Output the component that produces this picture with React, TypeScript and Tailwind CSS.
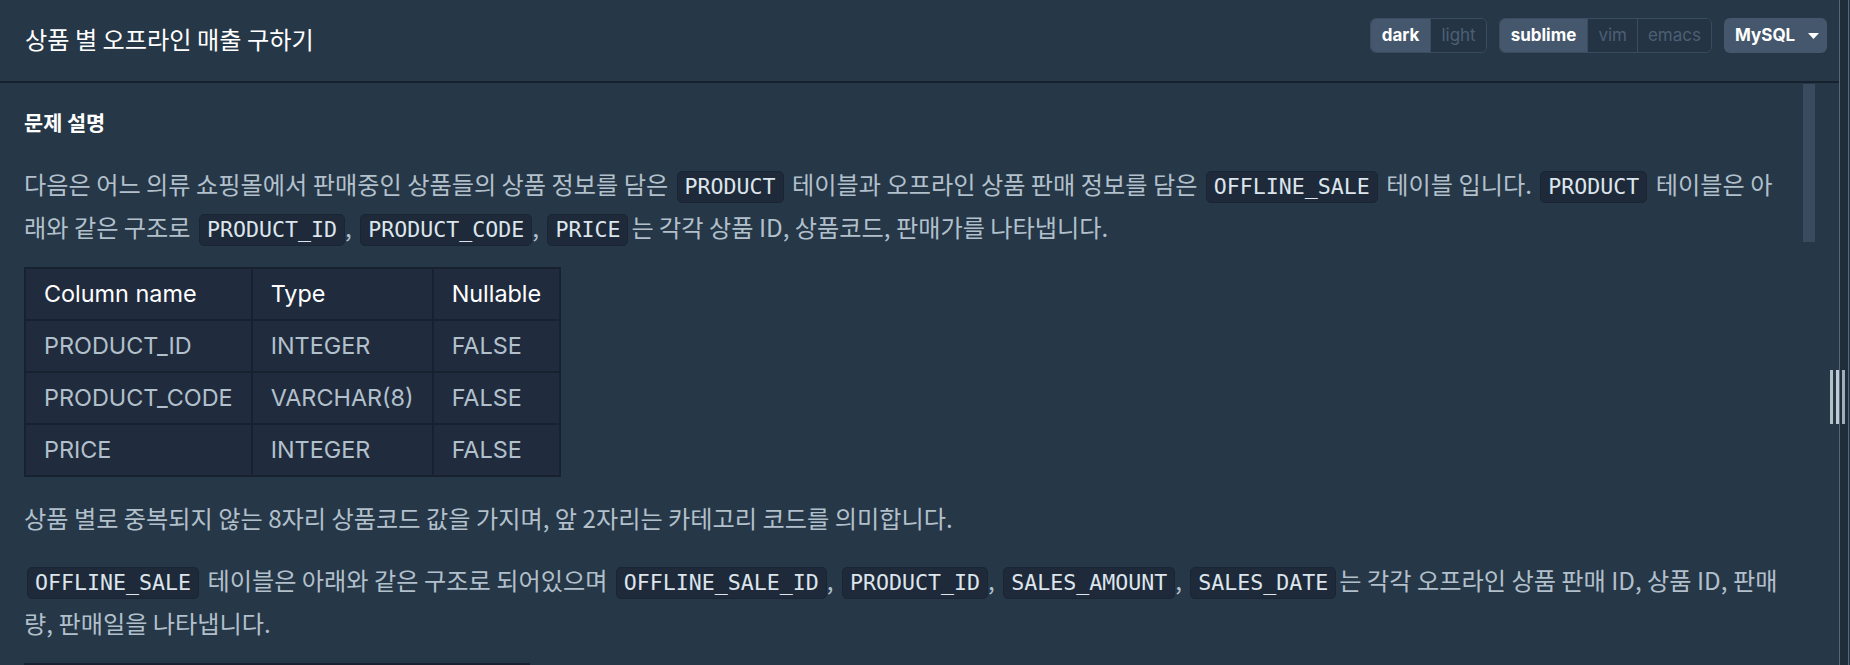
import React from "react";

const KR = "font-['Noto_Sans_CJK_KR',sans-serif]";

function C({ children, tight }: { children: React.ReactNode; tight?: boolean }) {
  return (
    <code
      className={`inline-block ${tight ? "ml-[3px] mr-0" : "mx-[3px]"} px-[7px] py-[3px] leading-[24px] rounded-[5px] border border-[#1a2533] bg-[#1e2a3a] text-[#dde5ec] text-[21.6px] font-['DejaVu_Sans_Mono',monospace]`}
    >
      {children}
    </code>
  );
}

function Table({ rows }: { rows: string[][] }) {
  return (
    <table className="border-collapse border-2 border-[#172130] bg-[#202b3d] font-['Inter','Noto_Sans_CJK_KR',sans-serif] text-[23.4px]">
      <thead>
        <tr>
          {["Column name", "Type", "Nullable"].map((h) => (
            <th key={h} className="border-2 border-[#172130] px-[18px] h-[52px] text-left font-normal text-white leading-[26px]">
              {h}
            </th>
          ))}
        </tr>
      </thead>
      <tbody>
        {rows.map((r, i) => (
          <tr key={i}>
            {r.map((c, j) => (
              <td key={j} className="border-2 border-[#172130] px-[18px] h-[52px] text-[#b2c0cc] leading-[26px] whitespace-nowrap">
                {c}
              </td>
            ))}
          </tr>
        ))}
      </tbody>
    </table>
  );
}

function Seg({ items, active }: { items: string[]; active: number }) {
  return (
    <div className="flex h-[35px] rounded-[6px] border border-[#3b4c60] overflow-hidden">
      {items.map((it, i) => (
        <div
          key={it}
          className={
            i === active
              ? "flex items-center px-[11px] bg-[#44576c] text-white font-bold"
              : "flex items-center px-[10px] bg-[#243445] text-[#4d5f74] border-l border-[#3b4c60]"
          }
        >
          {it}
        </div>
      ))}
    </div>
  );
}

export default function App() {
  return (
    <div className="w-[1850px] h-[665px] overflow-hidden flex bg-[#263747]">
      <div className="relative w-[1839px] h-full flex flex-col">
        <header className="h-[83px] shrink-0 flex justify-between items-start pt-[18px] pl-[25px] pr-[12px] border-b-2 border-[#18222e]">
          <h1 className={`${KR} text-[24.2px] leading-[35px] mt-[3px] text-white font-normal`}>
            상품 별 오프라인 매출 구하기
          </h1>
          <div className="flex gap-[12px] font-['Inter',sans-serif] text-[17px]">
            <Seg items={["dark", "light"]} active={0} />
            <Seg items={["sublime", "vim", "emacs"]} active={0} />
            <div className="flex items-center h-[35px] w-[103px] rounded-[6px] bg-[#44576c] text-white font-bold pl-[11px] gap-[13px]">
              MySQL
              <svg width="11" height="6" viewBox="0 0 11 6">
                <path d="M0 0 L11 0 L5.5 6 Z" fill="#ffffff" />
              </svg>
            </div>
          </div>
        </header>
        <div className={`relative flex-1 overflow-hidden pl-[24px] pr-[55px] pt-[24px] ${KR} text-[#b2c0cc] text-[24.2px] leading-[43px]`}>
          <h5 className="text-white font-bold text-[20.8px] leading-[30px] mb-[25px]">문제 설명</h5>
          <div className="flex flex-col gap-[19px]">
            <p>
              다음은 어느 의류 쇼핑몰에서 판매중인 상품들의 상품 정보를 담은 <C>PRODUCT</C> 테이블과 오프라인 상품 판매 정보를 담은 <C>OFFLINE_SALE</C> 테이블 입니다. <C>PRODUCT</C> 테이블은 아래와 같은 구조로 <C tight>PRODUCT_ID</C>, <C tight>PRODUCT_CODE</C>, <C>PRICE</C>는 각각 상품 ID, 상품코드, 판매가를 나타냅니다.
            </p>
            <div>
              <Table
                rows={[
                  ["PRODUCT_ID", "INTEGER", "FALSE"],
                  ["PRODUCT_CODE", "VARCHAR(8)", "FALSE"],
                  ["PRICE", "INTEGER", "FALSE"],
                ]}
              />
            </div>
            <p>상품 별로 중복되지 않는 8자리 상품코드 값을 가지며, 앞 2자리는 카테고리 코드를 의미합니다.</p>
            <p>
              <C>OFFLINE_SALE</C> 테이블은 아래와 같은 구조로 되어있으며 <C tight>OFFLINE_SALE_ID</C>, <C tight>PRODUCT_ID</C>, <C tight>SALES_AMOUNT</C>, <C>SALES_DATE</C>는 각각 오프라인 상품 판매 ID, 상품 ID, 판매량, 판매일을 나타냅니다.
            </p>
            <div>
              <Table
                rows={[
                  ["OFFLINE_SALE_ID", "INTEGER", "FALSE"],
                  ["PRODUCT_ID", "INTEGER", "FALSE"],
                  ["SALES_AMOUNT", "INTEGER", "FALSE"],
                  ["SALES_DATE", "DATE", "FALSE"],
                ]}
              />
            </div>
          </div>
          <div className="absolute left-[1803px] top-[1px] w-[12px] h-[158px] bg-[#3a4b5f]" />
        </div>
        <div className="absolute left-[1830px] top-[370px] flex gap-[3px] z-10">
          <div className="w-[3px] h-[54px] bg-[#b3c1c9]" />
          <div className="w-[3px] h-[54px] bg-[#c0ccd4]" />
          <div className="w-[3px] h-[54px] bg-[#9fadb7]" />
        </div>
      </div>
      <div className="w-[11px] h-full flex">
        <div className="w-[1px] bg-[#56667a]" />
        <div className="w-[8px] bg-[#1f2c39]" />
        <div className="w-[1px] bg-[#56667a]" />
        <div className="w-[1px] bg-[#263747]" />
      </div>
    </div>
  );
}
